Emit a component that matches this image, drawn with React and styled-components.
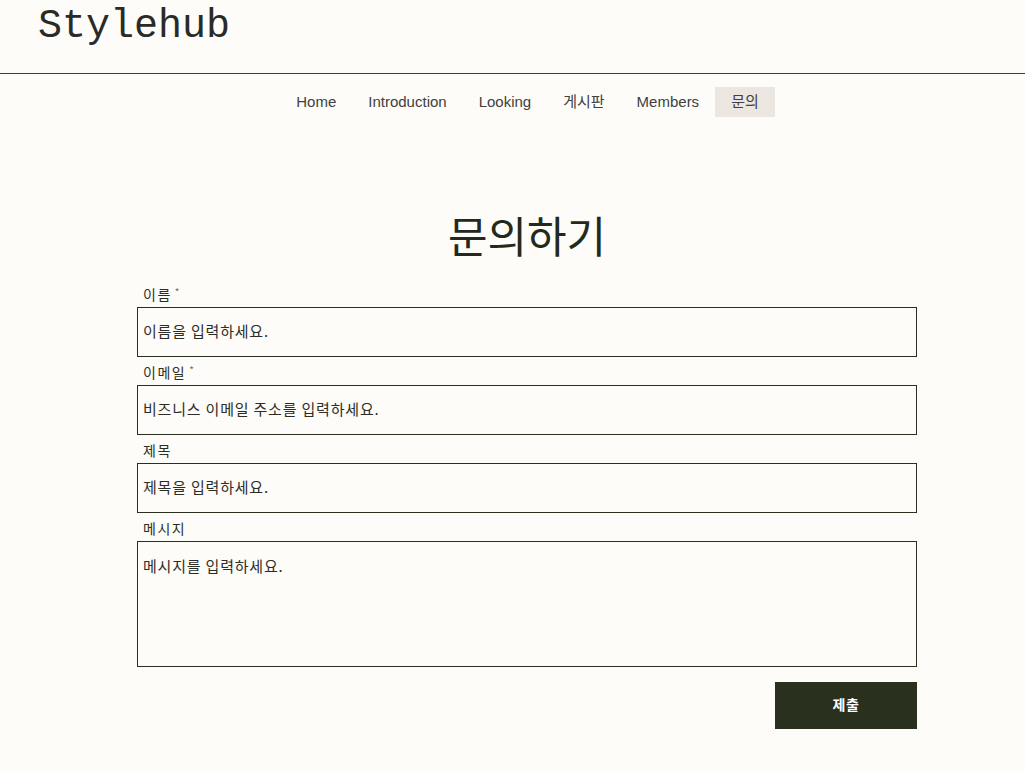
import React from "react";
import styled, { createGlobalStyle } from "styled-components";

const GlobalStyle = createGlobalStyle`
  html, body {
    margin: 0;
    padding: 0;
    background: #fdfcf9;
  }
  body {
    font-family: "Liberation Sans", "Noto Sans CJK KR", sans-serif;
    color: #2a301e;
  }
  * { box-sizing: border-box; }
`;

const Page = styled.div`
  min-height: 771px;
  background: #fdfcf9;
`;

const Header = styled.header`
  height: 74px;
  padding: 7px 0 0 38px;
  border-bottom: 1px solid #3d3d33;
`;

const Logo = styled.div`
  font-family: "Liberation Mono", monospace;
  font-size: 40px;
  line-height: 40px;
  color: #2a2a26;
`;

const Nav = styled.nav`
  display: flex;
  justify-content: center;
  padding-left: 30px;
  margin-top: 13px;
`;

const NavItem = styled.a`
  display: block;
  height: 30px;
  line-height: 30px;
  padding: 0 16px;
  font-family: "Liberation Sans", "Noto Sans CJK KR", sans-serif;
  font-size: 15px;
  color: #404040;
  text-decoration: none;
  background: ${(p) => (p.$active ? "#ebe6e0" : "transparent")};
`;

const Main = styled.main`
  display: flex;
  flex-direction: column;
  align-items: center;
  padding-left: 29px;
`;

const Title = styled.h1`
  margin: 92px 0 26px;
  font-family: "Noto Sans CJK KR", sans-serif;
  font-weight: 400;
  font-size: 43px;
  line-height: 50px;
  color: #232a1c;
`;

const Form = styled.form`
  width: 780px;
  display: flex;
  flex-direction: column;
  gap: 6px;
`;

const Field = styled.div`
  display: flex;
  flex-direction: column;
`;

const Label = styled.label`
  font-family: "Noto Sans CJK KR", sans-serif;
  font-size: 14px;
  letter-spacing: 1.5px;
  line-height: 18px;
  height: 18px;
  padding-left: 6px;
  margin-bottom: 4px;
  color: #2a301e;
`;

const Req = styled.span`
  font-size: 10px;
  line-height: 0;
  position: relative;
  top: -4px;
  margin-left: 3px;
  color: #6b6b6b;
`;

const inputBase = `
  width: 100%;
  border: 1px solid #2a301e;
  background: transparent;
  font-family: "Noto Sans CJK KR", sans-serif;
  font-size: 15px;
  letter-spacing: 0.8px;
  color: #2a301e;
  outline: none;
  &::placeholder {
    color: #2d2d28;
    opacity: 1;
  }
`;

const Input = styled.input`
  ${inputBase}
  height: 50px;
  padding: 0 5px 4px;
`;

const TextArea = styled.textarea`
  ${inputBase}
  height: 126px;
  padding: 15px 5px;
  line-height: 18px;
  resize: none;
  display: block;
`;

const Actions = styled.div`
  display: flex;
  justify-content: flex-end;
  margin-top: 9px;
`;

const Submit = styled.button`
  width: 142px;
  height: 47px;
  padding: 0 0 3px;
  border: none;
  background: #29301e;
  color: #ffffff;
  font-family: "Noto Sans CJK KR", sans-serif;
  font-weight: 700;
  font-size: 14px;
  letter-spacing: 0.5px;
  cursor: pointer;
`;

const navItems = ["Home", "Introduction", "Looking", "게시판", "Members", "문의"];

export default function App() {
  return (
    <Page>
      <GlobalStyle />
      <Header>
        <Logo>Stylehub</Logo>
      </Header>
      <Nav>
        {navItems.map((item) => (
          <NavItem key={item} href="#" $active={item === "문의"}>
            {item}
          </NavItem>
        ))}
      </Nav>
      <Main>
        <Title>문의하기</Title>
        <Form onSubmit={(e) => e.preventDefault()}>
          <Field>
            <Label>
              이름<Req>*</Req>
            </Label>
            <Input placeholder="이름을 입력하세요." />
          </Field>
          <Field>
            <Label>
              이메일<Req>*</Req>
            </Label>
            <Input placeholder="비즈니스 이메일 주소를 입력하세요." />
          </Field>
          <Field>
            <Label>제목</Label>
            <Input placeholder="제목을 입력하세요." />
          </Field>
          <Field>
            <Label>메시지</Label>
            <TextArea placeholder="메시지를 입력하세요." />
          </Field>
          <Actions>
            <Submit type="submit">제출</Submit>
          </Actions>
        </Form>
      </Main>
    </Page>
  );
}
